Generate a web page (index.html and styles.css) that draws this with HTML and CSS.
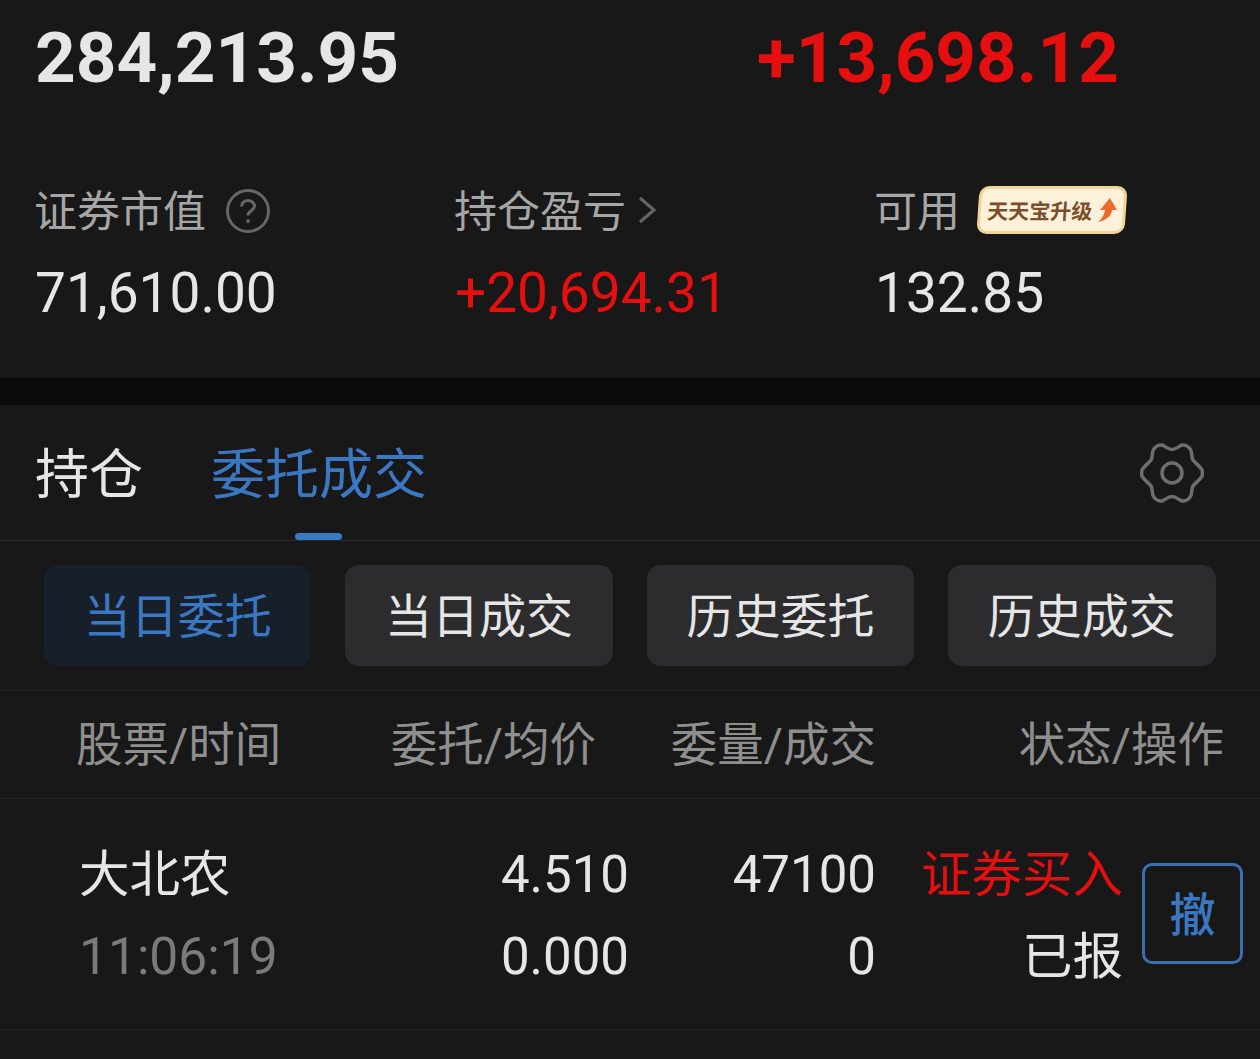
FILE: index.html
```html
<!DOCTYPE html>
<html lang="zh-CN">
<head>
  <meta charset="UTF-8">
  <meta name="viewport" content="width=device-width, initial-scale=1.0">
  <title>持仓</title>
  <link rel="stylesheet" href="styles.css">
</head>
<body>
  <section class="summary">
    <div class="totals">
      <div class="total">284,213.95</div>
      <div class="total red">+13,698.12</div>
    </div>
    <div class="stats">
      <div class="stat">
        <div class="stat-label">证券市值
          <svg class="help" width="44" height="44" viewBox="0 0 44 44" fill="none" stroke="#666" stroke-width="3">
            <circle cx="22" cy="22" r="20.5"/>
            <path d="M15.500 17.500c0-3.500 3-6 6.500-6s6.500 2.500 6.500 5.500c0 4.500-6.500 4.500-6.500 9.500"/>
            <circle cx="22" cy="32" r="1.200" fill="#666" stroke-width="1.500"/>
          </svg>
        </div>
        <div class="stat-value">71,610.00</div>
      </div>
      <div class="stat">
        <div class="stat-label">持仓盈亏
          <svg class="chevron" width="18" height="28" viewBox="0 0 18 28" fill="none" stroke="#666" stroke-width="3">
            <path d="M2 2l14 12L2 26"/>
          </svg>
        </div>
        <div class="stat-value red">+20,694.31</div>
      </div>
      <div class="stat">
        <div class="stat-label">可用
          <span class="upgrade">天天宝升级
            <svg width="18" height="24" viewBox="0 0 18 24">
              <path d="M10 0l8 12h-5c0 6-5 10-13 12 4-4 6-8 6-12H1z" fill="#ec6a2c"/>
            </svg>
          </span>
        </div>
        <div class="stat-value">132.85</div>
      </div>
    </div>
  </section>

  <div class="band"></div>

  <section class="panel">
    <div class="tabs">
      <div class="tab">持仓</div>
      <div class="tab tab-active">委托成交</div>
      <svg class="gear" width="64" height="60" viewBox="0 0 64 60" fill="none" stroke="#6e6e6e" stroke-width="3.500">
        <circle cx="32" cy="30" r="10"/>
        <path d="M22 2C25 3 28 6.500 32 6.500S39 3 42 2C45 1.500 49 3.500 50.500 6.500C52.500 10 51 14 53 17C55 20 60 23 62 27C62.600 29 62.600 31 62 33C60 37 55 40 53 43C51 46 52.500 50 50.500 53.500C49 56.500 45 58.500 42 58C39 57 36 53.500 32 53.500S25 57 22 58C19 58.500 15 56.500 13.500 53.500C11.500 50 13 46 11 43C9 40 4 37 2 33C1.400 31 1.400 29 2 27C4 23 9 20 11 17C13 14 11.500 10 13.500 6.500C15 3.500 19 1.500 22 2z"/>
      </svg>
    </div>
    <div class="filters">
      <div class="filter filter-active">当日委托</div>
      <div class="filter">当日成交</div>
      <div class="filter">历史委托</div>
      <div class="filter">历史成交</div>
    </div>
    <div class="table-head">
      <div class="col-name">股票/时间</div>
      <div class="col-price">委托/均价</div>
      <div class="col-qty">委量/成交</div>
      <div class="col-status">状态/操作</div>
    </div>
    <div class="row">
      <div class="col-name">
        <div class="cell cell-cjk">大北农</div>
        <div class="cell muted">11:06:19</div>
      </div>
      <div class="col-price">
        <div class="cell">4.510</div>
        <div class="cell">0.000</div>
      </div>
      <div class="col-qty">
        <div class="cell">47100</div>
        <div class="cell">0</div>
      </div>
      <div class="col-side">
        <div class="cell cell-cjk red">证券买入</div>
        <div class="cell cell-cjk">已报</div>
      </div>
      <div class="cancel">撤</div>
    </div>
  </section>
</body>
</html>
```

FILE: styles.css
```css
* {
  box-sizing: border-box;
}

body {
  margin: 0;
  height: 1059px;
  overflow: hidden;
  background-color: #181818;
  color: #e6e6e6;
  font-family: Roboto, "Noto Sans CJK SC", sans-serif;
}

.red {
  color: #e50f0f;
}

/* Top summary */
.summary {
  height: 378px;
  padding-left: 35px;
}

.totals {
  display: grid;
  grid-template-columns: 722px 1fr;
  height: 115px;
  padding-top: 20px;
}

.total {
  font-size: 71px;
  line-height: 76px;
  font-weight: 700;
}

.stats {
  display: grid;
  grid-template-columns: 420px 420px 1fr;
  padding-top: 65px;
}

.stat-label {
  display: flex;
  align-items: center;
  height: 56px;
  margin-left: -1px;
  font-size: 43px;
  color: #a6a6a6;
}

.help {
  margin-left: 20px;
  margin-top: 5px;
}

.chevron {
  margin-left: 12px;
  margin-top: 4px;
}

.upgrade {
  display: flex;
  align-items: center;
  justify-content: center;
  gap: 6px;
  width: 148px;
  height: 48px;
  margin-left: 18px;
  margin-top: 4px;
  border: 3px solid #f0d596;
  border-radius: 10px;
  background-color: #fdf1d9;
  color: #7a4e2a;
  font-size: 21px;
  font-weight: 700;
  transform: skewX(-4deg);
}

.stat-value {
  margin-top: 25px;
  font-size: 55px;
  line-height: 64px;
}

.band {
  height: 27px;
  background-color: #0b0b0b;
}

/* Tabs, filters and orders table */
.tabs {
  display: flex;
  align-items: center;
  height: 136px;
  padding-left: 35px;
  border-bottom: 1px solid #2a2a2b;
}

.tab {
  position: relative;
  height: 135px;
  line-height: 141px;
  margin-right: 68px;
  font-size: 54px;
}

.tab-active {
  color: #3a78c4;
}

.tab-active::after {
  content: "";
  position: absolute;
  left: 84px;
  bottom: 0;
  width: 47px;
  height: 7px;
  border-radius: 4px;
  background-color: #3a78c4;
}

.gear {
  margin-left: auto;
  margin-right: 56px;
}

.filters {
  display: flex;
  gap: 34px;
  height: 150px;
  padding: 24px 44.500px 24px 44px;
  border-bottom: 1px solid #252526;
}

.filter {
  flex: 1;
  height: 101px;
  line-height: 104px;
  border-radius: 14px;
  background-color: #2c2c2e;
  text-align: center;
  font-size: 47px;
}

.filter-active {
  background-color: #17202a;
  color: #3a78c4;
}

.table-head {
  display: flex;
  align-items: center;
  height: 108px;
  padding-right: 36px;
  padding-bottom: 8px;
  border-bottom: 1px solid #252526;
  font-size: 46.500px;
  color: #8f8f8f;
}

.col-name {
  width: 315px;
  padding-left: 79px;
}

.col-price {
  width: 314px;
  text-align: right;
}

.col-qty {
  width: 247px;
  text-align: right;
}

.col-status {
  flex: 1;
  text-align: right;
}

.table-head .col-name {
  padding-left: 76px;
}

.table-head .col-price {
  width: 281px;
}

.table-head .col-qty {
  width: 280px;
}

.row {
  display: flex;
  align-items: center;
  height: 231px;
  border-bottom: 1px solid #252526;
}

.cell {
  height: 82px;
  line-height: 86px;
  font-size: 51px;
}

.cell-cjk {
  font-size: 50.500px;
}

.muted {
  font-size: 51.500px;
  color: #7b7b7b;
}

.col-side {
  width: 247px;
  text-align: right;
}

.cancel {
  width: 101px;
  height: 101px;
  margin-left: 19px;
  margin-bottom: 2px;
  border: 3px solid #3a70b0;
  border-radius: 10px;
  line-height: 99px;
  text-align: center;
  font-size: 46px;
  font-weight: 500;
  color: #3a78c4;
}
```
